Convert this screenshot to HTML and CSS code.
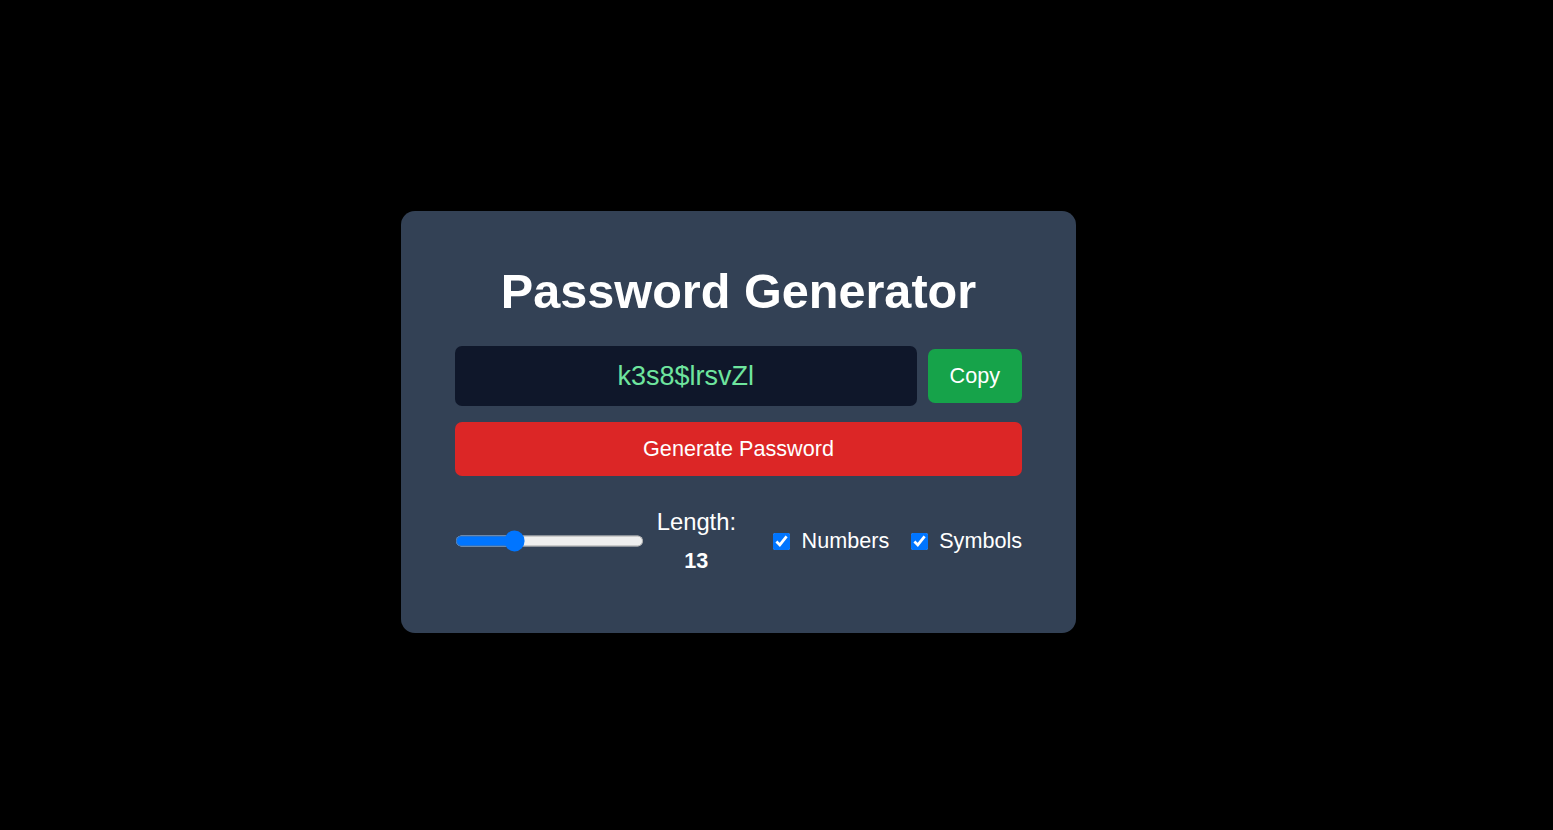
FILE: index.html
```html
<!DOCTYPE html>
<html lang="en">
<head>
<meta charset="utf-8">
<title>Password Generator</title>
<link rel="stylesheet" href="styles.css">
</head>
<body>
<div class="page">
  <div class="card">
    <h1 class="title">Password Generator</h1>
    <div class="output-row">
      <input class="password" type="text" value="k3s8$lrsvZl" readonly>
      <button class="btn btn-copy">Copy</button>
    </div>
    <button class="btn btn-generate">Generate Password</button>
    <div class="options">
      <input type="range" class="slider" min="6" max="30" value="13">
      <label class="length"><span class="length-label">Length:</span><span class="length-value">13</span></label>
      <label class="check check-numbers"><input type="checkbox" class="checkbox" checked><span>Numbers</span></label>
      <label class="check check-symbols"><input type="checkbox" class="checkbox" checked><span>Symbols</span></label>
    </div>
  </div>
</div>
</body>
</html>
```
FILE: styles.css
```css
html, body {
  margin: 0;
  padding: 0;
  background: #000;
}
body {
  font-family: "Liberation Sans", Arial, sans-serif;
  color: #fff;
}
.page {
  min-height: 100vh;
  box-sizing: border-box;
  display: flex;
  align-items: center;
  justify-content: center;
  padding: 14px 76px 0 0;
}
.card {
  width: 675px;
  box-sizing: border-box;
  background: #334155;
  border-radius: 14px;
  padding: 52px 54px 59px;
}
.title {
  margin: 0;
  font-size: 48.6px;
  font-weight: 700;
  text-align: center;
  line-height: normal;
}
.output-row {
  display: flex;
  align-items: center;
  gap: 11px;
  margin-top: 27px;
}
.password {
  flex: 1;
  min-width: 0;
  height: 60px;
  box-sizing: border-box;
  border: none;
  outline: none;
  border-radius: 7px;
  background: #0f172a;
  color: #6ee59e;
  font-family: "Liberation Sans", Arial, sans-serif;
  font-size: 27px;
  text-align: center;
  padding: 2px 10px 0;
}
.btn {
  border: none;
  border-radius: 7px;
  color: #fff;
  font-family: "Liberation Sans", Arial, sans-serif;
  font-size: 21.6px;
  line-height: normal;
  cursor: pointer;
}
.btn-copy {
  background: #16a34a;
  height: 54px;
  padding: 0 22px;
}
.btn-generate {
  display: block;
  width: 100%;
  height: 54px;
  margin-top: 16px;
  background: #dc2626;
  padding: 0;
}
.options {
  display: flex;
  align-items: center;
  margin-top: 31.8px;
}
.slider {
  zoom: 1.35;
  width: 140px;
  margin: 0;
}
.length {
  display: flex;
  flex-direction: column;
  align-items: center;
  margin-left: 13px;
}
.length-label {
  font-size: 23.8px;
  line-height: normal;
}
.length-value {
  font-size: 21.6px;
  font-weight: 700;
  line-height: normal;
  margin-top: 12.3px;
}
.check {
  display: flex;
  align-items: center;
  font-size: 21.6px;
}
.check-numbers {
  margin-left: 37px;
}
.check-symbols {
  margin-left: 21.5px;
}
.checkbox {
  width: 17px;
  height: 17px;
  margin: 1px 11.5px 0 0;
}
```
